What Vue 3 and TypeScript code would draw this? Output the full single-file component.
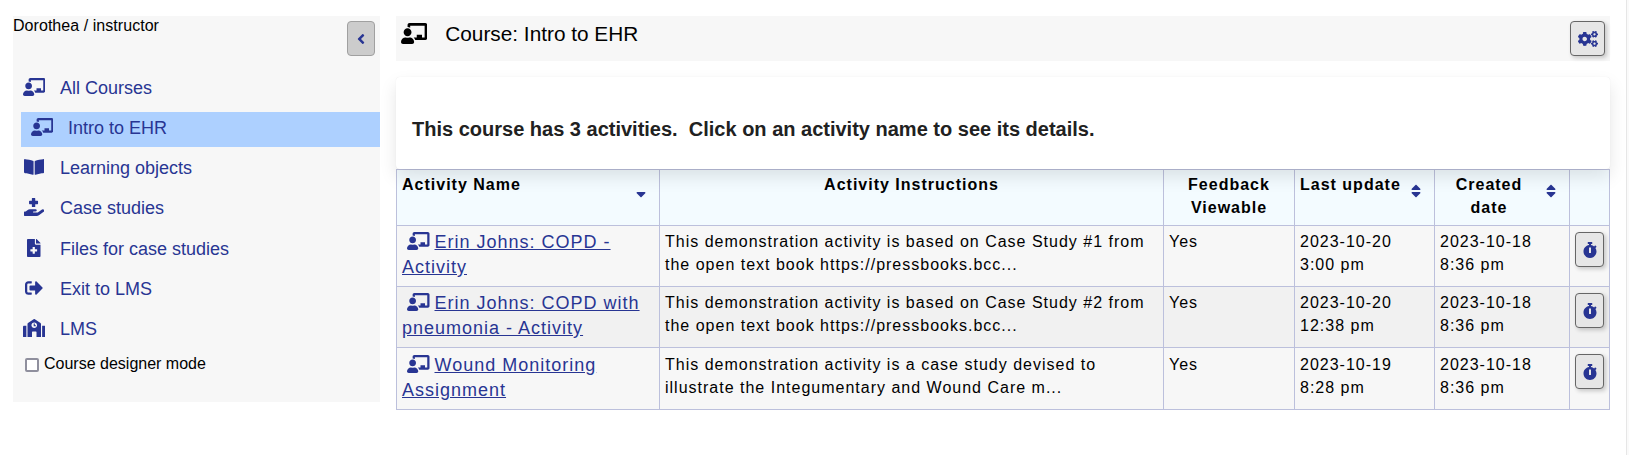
<script setup lang="ts">
interface Glyph {
  w: number
  d: string
}

const gear = (y: number, top: number, hole: number): string =>
  `M512.1 ${y}l-8.2 14.3c-3 5.3-9.4 7.5-15.1 5.4-11.8-4.4-22.6-10.7-32.1-18.6-4.6-3.8-5.8-10.5-2.8-15.7l8.2-14.3c-6.9-8-12.3-17.3-15.9-27.4h-16.5c-6 0-11.2-4.3-12.2-10.3-2-12-2.1-24.6 0-37.1 1-6 6.2-10.4 12.2-10.4h16.5c3.6-10.1 9-19.4 15.9-27.4l-8.2-14.3c-3-5.2-1.9-11.9 2.8-15.7 9.5-7.9 20.4-14.2 32.1-18.6 5.7-2.1 12.1.1 15.1 5.4l8.2 14.3c10.5-1.9 21.2-1.9 31.7 0L552 ${top}c3-5.3 9.4-7.5 15.1-5.4 11.8 4.4 22.6 10.7 32.1 18.6 4.6 3.8 5.8 10.5 2.8 15.7l-8.2 14.3c6.9 8 12.3 17.3 15.9 27.4h16.5c6 0 11.2 4.3 12.2 10.3 2 12 2.1 24.6 0 37.1-1 6-6.2 10.4-12.2 10.4h-16.5c-3.6 10.1-9 19.4-15.9 27.4l8.2 14.3c3 5.2 1.9 11.9-2.8 15.7-9.5 7.9-20.4 14.2-32.1 18.6-5.7 2.1-12.1-.1-15.1-5.4l-8.2-14.3c-10.4 1.9-21.2 1.9-31.7 0zM501.6 ${hole}c38.5 29.6 82.4-14.3 52.8-52.8-38.5-29.7-82.4 14.3-52.8 52.8z`

const icons: Record<string, Glyph> = {
  teacher: {
    w: 640,
    d: 'M208 352c-2.39 0-4.78.35-7.06 1.09C187.98 357.3 174.35 360 160 360c-14.35 0-27.98-2.7-40.95-6.91-2.28-.74-4.66-1.09-7.05-1.09C49.94 352-.33 402.48 0 464.62.14 490.88 21.73 512 48 512h224c26.27 0 47.86-21.12 48-47.38.33-62.14-49.94-112.62-112-112.62zm-48-32c53.02 0 96-42.98 96-96s-42.98-96-96-96-96 42.98-96 96 42.98 96 96 96zM592 0H208c-26.47 0-48 22.25-48 49.59V96c23.42 0 45.1 6.78 64 17.8V64h352v288h-64v-64H384v64h-76.24c19.1 16.69 33.12 38.73 39.69 64H592c26.47 0 48-22.25 48-49.59V49.59C640 22.25 618.47 0 592 0z',
  },
  book: {
    w: 576,
    d: 'M542.22 32.05c-54.8 3.11-163.72 14.43-230.96 55.59-4.64 2.84-7.27 7.89-7.27 13.17v363.87c0 11.55 12.63 18.85 23.28 13.49 69.18-34.82 169.23-44.32 218.7-46.92 16.89-.89 30.02-14.43 30.02-30.66V62.75c.01-17.71-15.35-31.74-33.77-30.7zM264.73 87.64C197.5 46.48 88.58 35.17 33.78 32.05 15.36 31.01 0 45.04 0 62.75V400.6c0 16.24 13.13 29.78 30.02 30.66 49.49 2.6 149.59 12.11 218.77 46.95 10.62 5.35 23.21-1.94 23.21-13.46V100.63c0-5.29-2.62-10.14-7.27-12.99z',
  },
  hand: {
    w: 576,
    d: 'M159.88,175.82h64v64a16,16,0,0,0,16,16h64a16,16,0,0,0,16-16v-64h64a16,16,0,0,0,16-16v-64a16,16,0,0,0-16-16h-64v-64a16,16,0,0,0-16-16h-64a16,16,0,0,0-16,16v64h-64a16,16,0,0,0-16,16v64A16,16,0,0,0,159.88,175.82ZM568.07,336.13a39.91,39.91,0,0,0-55.93-8.47L392.47,415.84H271.86a16,16,0,0,1,0-32H328c16,0,30.75-10.87,33.37-26.61a32.06,32.06,0,0,0-31.62-37.38h-160a117.7,117.7,0,0,0-74.12,26.25l-46.5,37.74H15.87a16.11,16.11,0,0,0-16,16v96a16.11,16.11,0,0,0,16,16h347a104.8,104.8,0,0,0,61.7-20.27L559.6,392A40,40,0,0,0,568.07,336.13Z',
  },
  file: {
    w: 384,
    d: 'M377 105L279.1 7c-4.5-4.5-10.6-7-17-7H256v128h128v-6.1c0-6.3-2.5-12.4-7-16.9zm-153 31V0H24C10.7 0 0 10.7 0 24v464c0 13.3 10.7 24 24 24h336c13.3 0 24-10.7 24-24V160H248c-13.2 0-24-10.8-24-24zm64 160v48c0 4.4-3.6 8-8 8h-56v56c0 4.4-3.6 8-8 8h-48c-4.4 0-8-3.6-8-8v-56h-56c-4.4 0-8-3.6-8-8v-48c0-4.4 3.6-8 8-8h56v-56c0-4.4 3.6-8 8-8h48c4.4 0 8 3.6 8 8v56h56c4.4 0 8 3.6 8 8z',
  },
  exit: {
    w: 512,
    d: 'M497 273L329 441c-15 15-41 4.5-41-17v-96H152c-13.3 0-24-10.7-24-24v-96c0-13.3 10.7-24 24-24h136V88c0-21.4 25.9-32 41-17l168 168c9.3 9.4 9.3 24.6 0 34zM192 436v-40c0-6.6-5.4-12-12-12H96c-17.7 0-32-14.3-32-32V160c0-17.7 14.3-32 32-32h84c6.6 0 12-5.4 12-12V76c0-6.6-5.4-12-12-12H96c-53 0-96 43-96 96v192c0 53 43 96 96 96h84c6.6 0 12-5.4 12-12z',
  },
  school: {
    w: 640,
    d: 'M0 224v272c0 8.84 7.16 16 16 16h80V192H32c-17.67 0-32 14.33-32 32zm360-48h-24v-40c0-4.42-3.58-8-8-8h-16c-4.42 0-8 3.58-8 8v64c0 4.42 3.58 8 8 8h48c4.42 0 8-3.58 8-8v-16c0-4.42-3.58-8-8-8zm137.75-63.96l-160-106.67a32.02 32.02 0 0 0-35.5 0l-160 106.67A32.002 32.002 0 0 0 128 138.66V512h128V368c0-8.84 7.16-16 16-16h96c8.84 0 16 7.16 16 16v144h128V138.67c0-10.7-5.35-20.7-14.25-26.63zM320 256c-44.18 0-80-35.82-80-80s35.82-80 80-80 80 35.82 80 80-35.82 80-80 80zm288-64h-64v320h80c8.84 0 16-7.16 16-16V224c0-17.67-14.33-32-32-32z',
  },
  stopwatch: {
    w: 448,
    d: 'M432 304c0 114.9-93.1 208-208 208S16 418.9 16 304c0-104 76.3-190.2 176-205.5V64h-28c-6.6 0-12-5.4-12-12V12c0-6.6 5.4-12 12-12h120c6.6 0 12 5.4 12 12v40c0 6.6-5.4 12-12 12h-28v34.5c37.5 5.8 71.7 21.6 99.7 44.6l27.5-27.5c4.7-4.7 12.3-4.7 17 0l28.3 28.3c4.7 4.7 4.7 12.3 0 17l-29.4 29.4-.6.6C419.7 223.3 432 262.2 432 304zm-176 36V188.5c0-6.6-5.4-12-12-12h-40c-6.6 0-12 5.4-12 12V340c0 6.6 5.4 12 12 12h40c6.6 0 12-5.4 12-12z',
  },
  angle: {
    w: 256,
    d: 'M31.7 239l136-136c9.4-9.4 24.6-9.4 33.9 0l22.6 22.6c9.4 9.4 9.4 24.6 0 33.9L127.9 256l96.4 96.4c9.4 9.4 9.4 24.6 0 33.9L201.7 409c-9.4 9.4-24.6 9.4-33.9 0l-136-136c-9.5-9.4-9.5-24.6-.1-34z',
  },
  sort: {
    w: 320,
    d: 'M41 288h238c21.4 0 32.1 25.9 17 41L177 448c-9.4 9.4-24.6 9.4-33.9 0L24 329c-15.1-15.1-4.4-41 17-41zm255-105L177 64c-9.4-9.4-24.6-9.4-33.9 0L24 183c-15.1 15.1-4.4 41 17 41h238c21.4 0 32.1-25.9 17-41z',
  },
  sortDown: {
    w: 320,
    d: 'M41 288h238c21.4 0 32.1 25.9 17 41L177 448c-9.4 9.4-24.6 9.4-33.9 0L24 329c-15.1-15.1-4.4-41 17-41z',
  },
  cogs: {
    w: 640,
    d:
      gear(191, 6.3, 132.2) +
      'M386.3 286.1l33.7 16.8c10.1 5.8 14.5 18.1 10.5 29.1-8.9 24.2-26.4 46.4-42.6 65.8-7.4 8.9-20.2 11.1-30.3 5.3l-29.1-16.8c-16 13.7-34.6 24.6-54.9 31.7v33.6c0 11.6-8.3 21.6-19.7 23.6-24.6 4.2-50.4 4.4-75.9 0-11.5-2-20-11.9-20-23.6V418c-20.3-7.2-38.9-18-54.9-31.7L74 403c-10 5.8-22.9 3.6-30.3-5.3-16.2-19.4-33.3-41.6-42.2-65.7-4-10.9.4-23.2 10.5-29.1l33.3-16.8c-3.9-20.9-3.9-42.4 0-63.4L12 205.8c-10.1-5.8-14.6-18.1-10.5-29 8.9-24.2 26-46.4 42.2-65.8 7.4-8.9 20.2-11.1 30.3-5.3l29.1 16.8c16-13.7 34.6-24.6 54.9-31.7V57.1c0-11.5 8.2-21.5 19.6-23.5 24.6-4.2 50.5-4.4 76-.1 11.5 2 20 11.9 20 23.6v33.6c20.3 7.2 38.9 18 54.9 31.7l29.1-16.8c10-5.8 22.9-3.6 30.3 5.3 16.2 19.4 33.2 41.6 42.1 65.8 4 10.9.1 23.2-10 29.1l-33.7 16.8c3.9 21 3.9 42.5 0 63.5zm-117.6 21.1c59.2-77-28.7-164.9-105.7-105.7-59.2 77 28.7 164.9 105.7 105.7z' +
      gear(490, 305.3, 431.2),
  },
}

const navItems = [
  { icon: 'teacher', label: 'All Courses', active: false },
  { icon: 'teacher', label: 'Intro to EHR', active: true },
  { icon: 'book', label: 'Learning objects', active: false },
  { icon: 'hand', label: 'Case studies', active: false },
  { icon: 'file', label: 'Files for case studies', active: false },
  { icon: 'exit', label: 'Exit to LMS', active: false },
  { icon: 'school', label: 'LMS', active: false },
]

const rows = [
  {
    name: ['Erin Johns: COPD -', 'Activity'],
    text: ['This demonstration activity is based on Case Study #1 from', 'the open text book https://pressbooks.bcc...'],
    updated: ['2023-10-20', '3:00 pm'],
    created: ['2023-10-18', '8:36 pm'],
  },
  {
    name: ['Erin Johns: COPD with', 'pneumonia - Activity'],
    text: ['This demonstration activity is based on Case Study #2 from', 'the open text book https://pressbooks.bcc...'],
    updated: ['2023-10-20', '12:38 pm'],
    created: ['2023-10-18', '8:36 pm'],
  },
  {
    name: ['Wound Monitoring', 'Assignment'],
    text: ['This demonstration activity is a case study devised to', 'illustrate the Integumentary and Wound Care m...'],
    updated: ['2023-10-19', '8:28 pm'],
    created: ['2023-10-18', '8:36 pm'],
  },
]

const box = (name: string): string => `0 0 ${icons[name].w} 512`
</script>

<template>
  <div class="page">
    <aside class="sidebar">
      <div class="user-row">
        <span class="user">Dorothea / instructor</span>
        <button class="btn collapse" aria-label="Collapse">
          <svg class="i16" :viewBox="box('angle')"><path :d="icons.angle.d" /></svg>
        </button>
      </div>
      <nav>
        <a v-for="item in navItems" :key="item.label" class="nav-item" :class="{ active: item.active }">
          <span class="nav-icon">
            <svg class="i18" :viewBox="box(item.icon)"><path :d="icons[item.icon].d" /></svg>
          </span>
          <span class="nav-label">{{ item.label }}</span>
        </a>
      </nav>
      <label class="mode"><input class="check" type="checkbox" /><span>Course designer mode</span></label>
    </aside>

    <main class="main">
      <header class="course-bar">
        <svg class="i21" :viewBox="box('teacher')"><path :d="icons.teacher.d" /></svg>
        <h1>Course: Intro to EHR</h1>
        <button class="btn settings" aria-label="Settings">
          <svg class="i16" :viewBox="box('cogs')"><path :d="icons.cogs.d" /></svg>
        </button>
      </header>

      <section class="card">
        <h2>This course has 3 activities.&nbsp; Click on an activity name to see its details.</h2>
      </section>

      <table>
        <colgroup>
          <col class="c1" /><col class="c2" /><col class="c3" /><col class="c4" /><col class="c5" /><col class="c6" />
        </colgroup>
        <thead>
          <tr>
            <th>
              <div class="head between">
                <span>Activity Name</span>
                <svg class="i16 sort" :viewBox="box('sortDown')"><path :d="icons.sortDown.d" /></svg>
              </div>
            </th>
            <th><span>Activity Instructions</span></th>
            <th>Feedback<br />Viewable</th>
            <th>
              <div class="head between">
                <span>Last update</span>
                <svg class="i16 sort" :viewBox="box('sort')"><path :d="icons.sort.d" /></svg>
              </div>
            </th>
            <th>
              <div class="head">
                <span class="grow">Created<br />date</span>
                <svg class="i16 sort" :viewBox="box('sort')"><path :d="icons.sort.d" /></svg>
              </div>
            </th>
            <th></th>
          </tr>
        </thead>
        <tbody>
          <tr v-for="(row, i) in rows" :key="i">
            <td class="name">
              <svg class="i18" :viewBox="box('teacher')"><path :d="icons.teacher.d" /></svg>
              <a>{{ row.name[0] }}<br />{{ row.name[1] }}</a>
            </td>
            <td>{{ row.text[0] }}<br />{{ row.text[1] }}</td>
            <td>Yes</td>
            <td>{{ row.updated[0] }}<br />{{ row.updated[1] }}</td>
            <td>{{ row.created[0] }}<br />{{ row.created[1] }}</td>
            <td class="action">
              <button class="btn timer" aria-label="Timer">
                <svg class="i16" :viewBox="box('stopwatch')"><path :d="icons.stopwatch.d" /></svg>
              </button>
            </td>
          </tr>
        </tbody>
      </table>
    </main>
  </div>
</template>

<style>
body {
  background: #fafafa;
}
</style>

<style scoped>
* {
  box-sizing: border-box;
}

.page {
  display: flex;
  gap: 16px;
  width: 1627px;
  height: 455px;
  padding: 16px 16px 0 13px;
  overflow: hidden;
  background: #fff;
  border-right: 1px solid #e6e6e6;
  color: #000;
  font-family: "Liberation Sans", Arial, sans-serif;
  font-size: 16px;
}

svg {
  display: block;
  flex: none;
  fill: currentColor;
}

.i16 { height: 16px; }
.i18 { height: 18px; }
.i21 { height: 21px; }

.btn {
  display: flex;
  flex: none;
  align-items: center;
  justify-content: center;
  height: 35px;
  padding: 0;
  border: 1px solid #666;
  border-radius: 4px;
  background: #e6e6e6;
  color: #283593;
  box-shadow: 2px 2px 4px rgba(0, 0, 0, 0.2);
}

.sidebar {
  width: 367px;
  height: 386px;
  background: #f7f7f7;
}

.user-row {
  display: flex;
  justify-content: space-between;
  height: 56px;
  padding-right: 5px;
}

.user {
  line-height: 19px;
  letter-spacing: 0.05px;
}

.collapse {
  width: 28px;
  margin-top: 5px;
  border-color: #a0a0a0;
  background: #ccc;
  box-shadow: none;
}

nav {
  display: grid;
  grid-auto-rows: 35px;
  row-gap: 5.15px;
  color: #283593;
  font-size: 18px;
}

.nav-item {
  display: flex;
  padding: 6px 0 0 9px;
}

.nav-item.active {
  margin-left: 8px;
  background: #add0ff;
}

.nav-icon {
  display: flex;
  justify-content: center;
  width: 24px;
}

.nav-label {
  margin-left: 14px;
  line-height: 20px;
}

.mode {
  display: flex;
  gap: 5px;
  align-items: center;
  margin: 5.7px 0 0 12px;
  line-height: 20px;
}

.check {
  appearance: none;
  width: 14px;
  height: 14px;
  margin: 3px 0 0;
  border: 2px solid #8f8f9d;
  border-radius: 2px;
  background: #fff;
}

.main {
  width: 1214px;
}

.course-bar {
  display: flex;
  height: 45px;
  padding: 5px 5px 0;
  background: #f7f7f7;
}

.course-bar .i21 {
  margin-top: 2px;
}

h1 {
  flex: 1;
  margin: 0 0 0 18px;
  font-size: 20.8px;
  font-weight: 400;
  line-height: 26px;
}

.settings {
  width: 35px;
}

.card {
  position: relative;
  height: 92px;
  margin-top: 16px;
  padding: 40px 16px 0;
  border-radius: 4px;
  background: #fff;
  box-shadow: 0 8px 17px rgba(0, 0, 0, 0.1), 0 0 1px rgba(0, 0, 0, 0.1);
}

h2 {
  margin: 0;
  color: #212121;
  font-size: 20px;
  line-height: 24px;
}

table {
  width: 1214px;
  table-layout: fixed;
  border-collapse: collapse;
  letter-spacing: 1px;
}

.c1 { width: 263px; }
.c2 { width: 504px; }
.c3 { width: 131px; }
.c4 { width: 140px; }
.c5 { width: 135px; }
.c6 { width: 40px; }

th,
td {
  padding: 5px 5px 0;
  border: 1px solid #bcc0dc;
  vertical-align: top;
  text-align: left;
  line-height: 22.5px;
  white-space: nowrap;
}

th {
  height: 56px;
  padding-top: 4px;
  background: #f3fbff;
  text-align: center;
}

td {
  height: 61px;
}

tbody tr { background: #f7f7f7; }
tbody tr:nth-child(even) { background: #f1f1f1; }

tbody tr:last-child td {
  height: 62px;
  padding-top: 6px;
}

.head {
  display: flex;
}

.head svg {
  color: #283593;
}

.between {
  justify-content: space-between;
}

.grow {
  flex: 1;
  padding-right: 8px;
}

.sort {
  margin: 9px 8px 0 0;
}

.name {
  padding-top: 4px;
  color: #283593;
  font-size: 18px;
  line-height: 25px;
}

tbody tr:last-child .name {
  padding-top: 5px;
}

.name svg {
  display: inline-block;
  margin: 0 5px;
  vertical-align: -2.25px;
}

.name a {
  text-decoration: underline;
}

.action {
  padding: 6px 0 0 5px;
}

tbody tr:last-child .action {
  padding-top: 6px;
}

.timer {
  width: 29px;
}
</style>
